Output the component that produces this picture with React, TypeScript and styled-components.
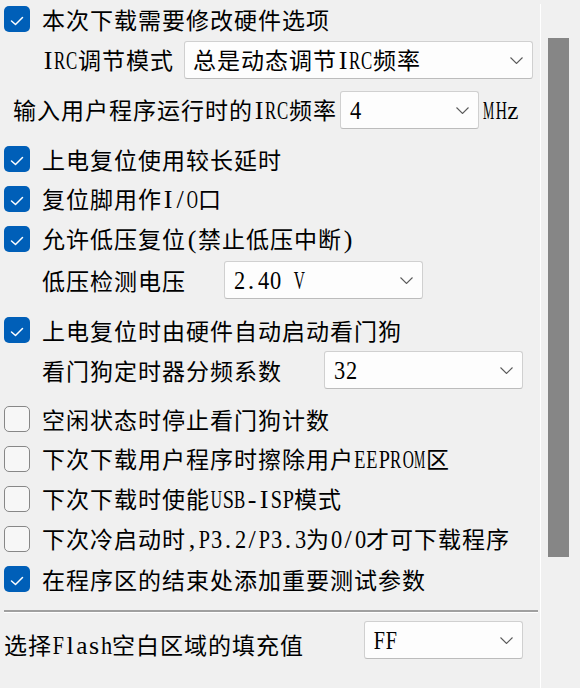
import React from "react";
import styled, { createGlobalStyle } from "styled-components";

const Global = createGlobalStyle`
  html, body { margin: 0; padding: 0; background: #f0f0f0; }
  body {
    font-family: "Noto Sans CJK SC", "Noto Sans CJK JP", sans-serif;
    font-size: 23px;
    letter-spacing: 1px;
    color: #000;
    line-height: 1.2;
  }
`;

const CELL = 12;
const LAT_SIZE = 26;
const LAT_FONT = `${LAT_SIZE}px "Liberation Serif"`;

const Page = styled.div`
  display: flex;
  width: 580px;
  height: 688px;
  overflow: hidden;
`;

const Content = styled.div`
  width: 540px;
  box-sizing: border-box;
  padding-left: 4px;
  display: flex;
  flex-direction: column;
  flex: none;
`;

const Row = styled.div<{ $h?: number; $mt?: number; $indent?: number }>`
  display: flex;
  align-items: center;
  height: ${(p) => p.$h ?? 40}px;
  margin-top: ${(p) => p.$mt ?? 0}px;
  padding-left: ${(p) => p.$indent ?? 0}px;
  white-space: nowrap;
`;

const Box = styled.span<{ $on: boolean }>`
  width: 26px;
  height: 26px;
  flex: none;
  box-sizing: border-box;
  border-radius: 5px;
  margin-right: 12px;
  background: ${(p) => (p.$on ? "#005fb8" : "#f7f7f7")};
  border: ${(p) => (p.$on ? "none" : "1.5px solid #878787")};
  display: flex;
  svg { display: block; }
`;

const Label = styled.span<{ $w: number; $dy?: number }>`
  width: ${(p) => p.$w}px;
  flex: none;
  margin-top: ${(p) => p.$dy ?? 0}px;
`;

const Select = styled.div<{ $w: number }>`
  width: ${(p) => p.$w}px;
  height: 38px;
  flex: none;
  box-sizing: border-box;
  background: #fdfdfd;
  border: 1px solid #d0d0d0;
  border-bottom-color: #bcbcbc;
  border-radius: 3px;
  display: flex;
  align-items: center;
  justify-content: space-between;
  padding: 0 9px 0 8px;
`;

const Line = styled.span`
  line-height: 28px;
`;

const LatCell = styled.span`
  display: inline-flex;
  justify-content: center;
  width: ${CELL}px;
  font-family: "Liberation Serif", serif;
  font-size: ${LAT_SIZE}px;
  line-height: 28px;
  letter-spacing: 0;
  vertical-align: baseline;
`;

const LatGlyph = styled.span`
  display: inline-block;
  flex: none;
  white-space: pre;
`;

const Unit = styled.span`
  margin-left: 4px;
`;

const Separator = styled.div`
  height: 0;
  margin-top: 11px;
  margin-right: 2px;
  border-top: 2px solid #a0a0a0;
  border-bottom: 1px solid #ffffff;
`;

const VLine = styled.div`
  width: 1px;
  flex: none;
  margin-top: 4px;
  background: #ffffff;
`;

const Track = styled.div`
  flex: 1;
  padding-left: 7px;
`;

const Thumb = styled.div`
  width: 21px;
  height: 519px;
  margin-top: 38px;
  background: #868686;
`;

let ctx: CanvasRenderingContext2D | null = null;
const widthCache: Record<string, number> = {};
function glyphWidth(ch: string): number {
  if (widthCache[ch] !== undefined) return widthCache[ch];
  if (!ctx && typeof document !== "undefined") {
    ctx = document.createElement("canvas").getContext("2d");
  }
  let w = 12;
  if (ctx) {
    ctx.font = LAT_FONT;
    w = ctx.measureText(ch).width;
  }
  widthCache[ch] = w;
  return w;
}

function LatChar({ ch }: { ch: string }) {
  const w = glyphWidth(ch);
  const max = CELL - 0.8;
  const s = w > max ? max / w : 1;
  return (
    <LatCell>
      <LatGlyph style={s < 1 ? { transform: `scaleX(${s.toFixed(3)})` } : undefined}>{ch}</LatGlyph>
    </LatCell>
  );
}

function T({ s }: { s: string }) {
  const parts = s.split(/([\x20-\x7e]+)/).filter((x) => x !== "");
  return (
    <Line>
      {parts.map((p, i) =>
        /^[\x20-\x7e]+$/.test(p) ? (
          <React.Fragment key={i}>
            {Array.from(p).map((c, j) => (
              <LatChar key={j} ch={c} />
            ))}
          </React.Fragment>
        ) : (
          <React.Fragment key={i}>{p}</React.Fragment>
        )
      )}
    </Line>
  );
}

function Check({ on }: { on: boolean }) {
  return (
    <Box $on={on}>
      {on && (
        <svg width="26" height="26" viewBox="0 0 26 26">
          <path d="M7.5 15 L11.5 18.5 L18.5 11.5" fill="none" stroke="#fff" strokeWidth="1.5" strokeLinecap="round" strokeLinejoin="round" />
        </svg>
      )}
    </Box>
  );
}

function Chevron() {
  return (
    <svg width="13" height="7" viewBox="0 0 13 7">
      <polyline points="0.5,0.5 6.5,6.5 12.5,0.5" fill="none" stroke="#5a5a5a" strokeWidth="1.1" />
    </svg>
  );
}

function Drop({ w, value }: { w: number; value: string }) {
  return (
    <Select $w={w}>
      <T s={value} />
      <Chevron />
    </Select>
  );
}

function CheckRow({ on, text, mt, h }: { on: boolean; text: string; mt?: number; h?: number }) {
  return (
    <Row $mt={mt} $h={h}>
      <Check on={on} />
      <T s={text} />
    </Row>
  );
}

export default function App() {
  return (
    <Page>
      <Global />
      <Content>
        <CheckRow on h={38} text="本次下载需要修改硬件选项" />
        <Row $mt={2} $indent={38}>
          <Label $w={142}>
            <T s="IRC调节模式" />
          </Label>
          <Drop w={349} value="总是动态调节IRC频率" />
        </Row>
        <Row $mt={10} $indent={9}>
          <Label $w={327}>
            <T s="输入用户程序运行时的IRC频率" />
          </Label>
          <Drop w={139} value="4" />
          <Unit>
            <T s="MHz" />
          </Unit>
        </Row>
        <CheckRow on mt={9} text="上电复位使用较长延时" />
        <CheckRow on text="复位脚用作I/O口" />
        <CheckRow on text="允许低压复位(禁止低压中断)" />
        <Row $mt={1} $indent={38}>
          <Label $w={182}>
            <T s="低压检测电压" />
          </Label>
          <Drop w={199} value="2.40 V" />
        </Row>
        <CheckRow on mt={10} text="上电复位时由硬件自动启动看门狗" />
        <Row $indent={38}>
          <Label $w={282}>
            <T s="看门狗定时器分频系数" />
          </Label>
          <Drop w={199} value="32" />
        </Row>
        <CheckRow on={false} mt={9} text="空闲状态时停止看门狗计数" />
        <CheckRow on={false} text="下次下载用户程序时擦除用户EEPROM区" />
        <CheckRow on={false} text="下次下载时使能USB-ISP模式" />
        <CheckRow on={false} text="下次冷启动时,P3.2/P3.3为0/0才可下载程序" />
        <CheckRow on text="在程序区的结束处添加重要测试参数" />
        <Separator />
        <Row $mt={7}>
          <Label $w={360} $dy={10}>
            <T s="选择Flash空白区域的填充值" />
          </Label>
          <Drop w={159} value="FF" />
        </Row>
      </Content>
      <VLine />
      <Track>
        <Thumb />
      </Track>
    </Page>
  );
}
